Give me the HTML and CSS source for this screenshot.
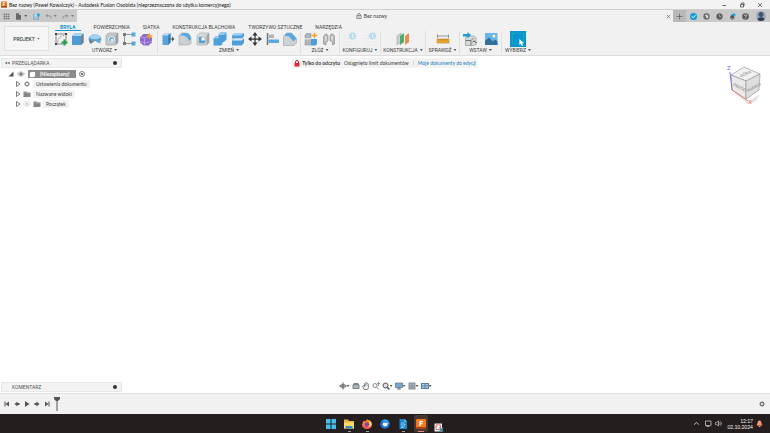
FILE: index.html
```html
<!DOCTYPE html>
<html lang="pl">
<head>
<meta charset="utf-8">
<title>Bez nazwy - Autodesk Fusion Osobista</title>
<link rel="stylesheet" href="styles.css">
</head>
<body>
<header class="titlebar">
  <svg class="app-logo" viewBox="0 0 14 14"><rect width="14" height="14" rx="2" fill="#e8701a"/><path d="M5 11V3h5M5 7h4" fill="none" stroke="#fff" stroke-width="2"/><path d="M0 11h14v3H0z" fill="#9c4312"/></svg>
  <h1>Bez nazwy (Paweł Kowalczyk) - Autodesk Fusion Osobista (nieprzeznaczona do użytku komercyjnego)</h1>
  <div class="window-controls">
    <button aria-label="Minimalizuj"><svg viewBox="0 0 12 12"><path d="M3 7h7" stroke="#444" stroke-width="1.6"/></svg></button>
    <button aria-label="Przywróć"><svg viewBox="0 0 12 12"><path d="M3 5h6v5H3zM5 4V2h5v6" fill="none" stroke="#444" stroke-width="1.6"/></svg></button>
    <button aria-label="Zamknij"><svg viewBox="0 0 12 12"><path d="M2 2l8 8M10 2l-8 8" stroke="#444" stroke-width="1.4"/></svg></button>
  </div>
</header>

<div class="docbar">
  <div class="quick">
    <button aria-label="Panel danych"><svg viewBox="0 0 20 20"><path d="M2 2h4v4H2zM8 2h4v4H8zM14 2h4v4h-4zM2 8h4v4H2zM8 8h4v4H8zM14 8h4v4h-4zM2 14h4v4H2zM8 14h4v4H8zM14 14h4v4h-4z" fill="#6b6b6b"/></svg></button>
    <button class="with-caret" aria-label="Plik"><svg viewBox="0 0 20 20"><path d="M3 1h9l5 5v13H3z" fill="#666"/><path d="M12 1v5h5" fill="#ddd"/></svg><i class="caret"></i></button>
    <button aria-label="Zapisz"><svg viewBox="0 0 20 20"><path d="M2 4h14v14H2z" fill="#a9c6da" stroke="#6d9ab8" stroke-width="2"/><path d="M5 4h6v5H5z" fill="#eef5fa"/><circle cx="15" cy="6" r="5" fill="#3aa4dc"/></svg></button>
    <button class="with-caret dim" aria-label="Cofnij"><svg viewBox="0 0 20 20"><path d="M8 3L3 8l5 5M3 8h8c5 0 7 4 6 8" fill="none" stroke="#666" stroke-width="2.4"/></svg><i class="caret"></i></button>
    <button class="with-caret dim" aria-label="Ponów"><svg viewBox="0 0 20 20"><path d="M12 3l5 5-5 5M17 8H9c-5 0-7 4-6 8" fill="none" stroke="#666" stroke-width="2.4"/></svg><i class="caret"></i></button>
  </div>
  <div class="doc-tab">
    <span class="doc-name"><svg viewBox="0 0 14 14"><path d="M4 6V4a3 3 0 0 1 6 0v2M2 6h10v7H2zM7 8v3" fill="none" stroke="#555" stroke-width="1.5"/></svg>Bez nazwy</span>
    <button class="tab-close" aria-label="Zamknij kartę"><svg viewBox="0 0 12 12"><path d="M2 2l8 8M10 2l-8 8" stroke="#666" stroke-width="1.7"/></svg></button>
  </div>
  <button class="new-tab" aria-label="Nowa karta"><svg viewBox="0 0 12 12"><path d="M6 1v10M1 6h10" stroke="#666" stroke-width="1.4"/></svg></button>
  <div class="account">
    <button aria-label="Rozszerzenia"><svg viewBox="0 0 20 20"><circle cx="10" cy="10" r="10" fill="#129bdb"/><path d="M5 9l4 5 7-8" fill="none" stroke="#fff" stroke-width="2.5"/></svg></button>
    <button aria-label="Synchronizacja"><svg viewBox="0 0 20 20"><circle cx="10" cy="10" r="9" fill="#666"/><path d="M7 5h5l4 5-3 5H9V9H6z" fill="#ddd"/></svg></button>
    <button aria-label="Zadania"><svg viewBox="0 0 20 20"><circle cx="10" cy="10" r="9" fill="#606060"/><path d="M10 4v6h5" fill="none" stroke="#bbb" stroke-width="2"/></svg></button>
    <button aria-label="Powiadomienia"><svg viewBox="0 0 20 20"><path d="M2 16c3-3 1-10 8-12 5 2 4 8 7 12zM7 17h5v2H7z" fill="#555"/><circle cx="14" cy="5" r="4.5" fill="#1ba1e2"/></svg></button>
    <button aria-label="Pomoc"><svg viewBox="0 0 20 20"><circle cx="10" cy="10" r="9.500" fill="#595959"/><path d="M7 8c0-4 6-4 6 0 0 2-3 2-3 4M10 14v2" fill="none" stroke="#fff" stroke-width="2"/></svg></button>
    <button class="avatar" aria-label="Konto"><svg viewBox="0 0 20 20"><circle cx="10" cy="10" r="10" fill="#9cabbb"/><circle cx="10" cy="7" r="5" fill="#3e536c"/><path d="M3 17c1-6 13-6 14 0-3 4-11 4-14 0z" fill="#2d405a"/></svg></button>
  </div>
</div>

<section class="ribbon">
  <button class="workspace">PROJEKT<i class="caret"></i></button>
  <div class="ribbon-main">
    <nav class="tabs">
      <a href="#" class="active">BRYŁA</a><a href="#">POWIERZCHNIA</a><a href="#">SIATKA</a><a href="#">KONSTRUKCJA BLACHOWA</a><a href="#">TWORZYWO SZTUCZNE</a><a href="#">NARZĘDZIA</a>
    </nav>
    <div class="groups">
      <div class="group g-create">
        <div class="tools">
          <button aria-label="Utwórz szkic"><svg viewBox="0 0 28 28"><path d="M4 4h20v20H4z" fill="none" stroke="#666" stroke-width="1.500"/><path d="M7 21C8 13 12 8 20 7" fill="none" stroke="#777" stroke-width="1.500" stroke-dasharray="4 2"/><path d="M2 2h4v4H2zM22 2h4v4h-4zM2 22h4v4H2z" fill="#444"/><path d="M21 15v12M15 21h12" stroke="#23a047" stroke-width="4"/></svg></button>
          <button aria-label="Wyciągnij"><svg viewBox="0 0 28 28"><path d="M2 8l5-5h18v18l-5 5H2z" fill="#4e9bd5"/><path d="M2 8l5-5h18l-5 5z" fill="#a9d4f3"/><path d="M20 8l5-5v18l-5 5z" fill="#747e87"/></svg></button>
          <button aria-label="Obrót"><svg viewBox="0 0 28 28"><path d="M1 14C3 1 25 1 27 14l-3 9-7-3c-1-3-5-3-6 0l-7 3z" fill="#64ade0"/><path d="M3 10c5-8 17-8 22 0-4 6-18 6-22 0z" fill="#a3d0ef"/><path d="M2 13c5 5 18 5 24 0" fill="none" stroke="#5d7f98"/><path d="M2 15l9 4-6 5z" fill="#777"/></svg></button>
          <button aria-label="Otwór"><svg viewBox="0 0 28 28"><path d="M2 7l5-5h19v19l-5 5H2z" fill="#c9cccf" stroke="#888"/><path d="M21 7l5-5v19l-5 5z" fill="#999fa4"/><circle cx="13" cy="15" r="8" fill="#eee" stroke="#888"/><circle cx="13" cy="15" r="5" fill="#62ade1"/><circle cx="14" cy="16" r="3" fill="#eee"/></svg></button>
          <button aria-label="Szyk"><svg viewBox="0 0 28 28"><path d="M5 5h18M5 5v18M5 23h18" stroke="#777" stroke-width="1.500"/><path d="M2 2h6v6H2zM2 20h6v6H2z" fill="#777"/><path d="M19 1h8v8h-8zM19 19h8v8h-8z" fill="#59a9df"/></svg></button>
          <button aria-label="Utwórz formę"><svg viewBox="0 0 28 28"><path d="M2 10l7-6h10l7 8v9l-7 6H9l-7-6z" fill="#8e6acb"/><path d="M2 10l9 2 9-4M11 12v15M2 19c8 3 16 3 24-1" fill="none" stroke="#c3a8eb" stroke-width="1.500"/><path d="M21 1l2 5 5 2-5 2-2 5-2-5-5-2 5-2z" fill="#f7a51c"/></svg></button>
        </div>
        <button class="group-label">UTWÓRZ<i class="caret"></i></button>
      </div>
      <div class="group g-modify">
        <div class="tools">
          <button aria-label="Naciśnij i wyciągnij"><svg viewBox="0 0 28 28"><path d="M3 7l5-5h11v19l-5 5H3z" fill="#58a5dc"/><path d="M3 7l5-5h11l-5 5z" fill="#b9dcf4"/><path d="M14 7l5-5v19l-5 5z" fill="#3684bd"/><path d="M17 13h5V9l5 5-5 5v-4h-5z" fill="#555"/></svg></button>
          <button aria-label="Zaokrąglenie"><svg viewBox="0 0 28 28"><path d="M2 7l5-5h7c8 0 12 6 12 12v9l-5 3H2z" fill="#ccd0d2" stroke="#999"/><path d="M9 2h6c7 0 11 5 11 12l-5 4C21 11 15 7 4 7z" fill="#59a9df"/></svg></button>
          <button aria-label="Skorupa"><svg viewBox="0 0 28 28"><path d="M2 7l5-5h19v19l-5 5H2z" fill="#d8dbdd" stroke="#8c9195"/><path d="M21 7l5-5v19l-5 5z" fill="#a0a5aa"/><path d="M6 10h12v12H6z" fill="#f5f5f5" stroke="#888"/><path d="M6 22l5-5v-7H6zM6 22l5-5h7v5z" fill="#53a2da"/></svg></button>
          <button aria-label="Połącz"><svg viewBox="0 0 28 28"><path d="M1 13l4-4h6V5l4-4h12v14l-5 5h-3v4l-3 3H1z" fill="#4d9fda"/><path d="M1 13l4-4h6V5l4-4h12l-5 5H11v7z" fill="#93c9ef"/></svg></button>
          <button aria-label="Podziel"><svg viewBox="0 0 28 28"><path d="M2 7l5-5h19v7l-5 4H2z" fill="#4d9fda"/><path d="M2 7l5-5h19l-5 5z" fill="#a3d0ef"/><path d="M2 16l5-3h19v9l-5 5H2z" fill="#4d9fda"/><path d="M2 17l5-4h19l-5 4z" fill="#dceaf4"/></svg></button>
          <button aria-label="Przesuń"><svg viewBox="0 0 28 28"><path d="M14 5v18M5 14h18" stroke="#333" stroke-width="2.500"/><path d="M14 0l5 7H9zM14 28l5-7H9zM0 14l7-5v10zM28 14l-7-5v10z" fill="#333"/></svg></button>
          <button aria-label="Wyrównaj"><svg viewBox="0 0 28 28"><path d="M3 2v24" stroke="#777" stroke-width="3"/><path d="M5 5h11v7H5z" fill="#aeb4b8"/><path d="M5 15h21v7H5z" fill="#59a9df"/></svg></button>
          <button aria-label="Fazowanie"><svg viewBox="0 0 28 28"><path d="M1 9l6-7h10l10 11v9l-5 5H1z" fill="#cdd1d4" stroke="#92979b"/><path d="M7 2h10l10 11-6 6L11 8H3z" fill="#59a9df"/></svg></button>
        </div>
        <button class="group-label">ZMIEŃ<i class="caret"></i></button>
      </div>
      <div class="group g-assemble">
        <div class="tools">
          <button aria-label="Nowy komponent"><svg viewBox="0 0 28 28"><path d="M2 6l3-3h9v9H2zM2 15h11v11H2z" fill="#afb5b9" stroke="#858b90"/><path d="M2 15l3-3h9l-2 3z" fill="#e1e4e6"/><path d="M14 14h12v10l-3 3h-9z" fill="#4d9fda"/><path d="M21 0l2 5 5 2-5 2-2 5-2-5-5-2 5-2z" fill="#f7a51c"/></svg></button>
          <button aria-label="Połączenie"><svg viewBox="0 0 28 28"><path d="M3 24V11c1-9 9-9 9-2v9l-4 3v5zM16 9c0-7 9-7 9 2v13l-4 2v-6l-5-3z" fill="#b5b9bc" stroke="#777"/><path d="M8 8v10M20 8v9" stroke="#f0f0f0" stroke-width="2"/></svg></button>
        </div>
        <button class="group-label">ZŁÓŻ<i class="caret"></i></button>
      </div>
      <div class="group g-configure">
        <div class="tools">
          <button aria-label="Konfiguracja"><svg viewBox="0 0 28 28"><path d="M2 7h24v19H2zM2 13h24M2 20h24M10 7v19" fill="#f2f3f3" stroke="#e2e4e5"/><circle cx="19" cy="8" r="7" fill="#b9dced"/><path d="M19 4v6l4 2" fill="none" stroke="#eef7fb" stroke-width="2"/></svg></button>
          <button aria-label="Tabela konfiguracji"><svg viewBox="0 0 28 28"><path d="M2 7h24v19H2zM2 13h24M2 20h24M10 7v19" fill="#f2f3f3" stroke="#e2e4e5"/><circle cx="19" cy="8" r="7" fill="#b9dced"/><path d="M19 4v6l4 2" fill="none" stroke="#eef7fb" stroke-width="2"/></svg></button>
        </div>
        <button class="group-label">KONFIGURUJ<i class="caret"></i></button>
      </div>
      <div class="group g-construct">
        <div class="tools">
          <button aria-label="Płaszczyzna odsunięta"><svg viewBox="0 0 28 28"><path d="M2 8l8-6v18l-8 6z" fill="#ccd0d2" stroke="#8d9296"/><path d="M8 8l8-6v18l-8 6z" fill="#49ad6b"/><path d="M18 8l8-6v18l-8 6z" fill="#ec8b4b"/></svg></button>
        </div>
        <button class="group-label">KONSTRUKCJA<i class="caret"></i></button>
      </div>
      <div class="group g-inspect">
        <div class="tools">
          <button aria-label="Zmierz"><svg viewBox="0 0 28 28"><path d="M3 5v7M25 5v7M3 8h22" stroke="#777" stroke-width="1.500"/><path d="M2 14h24v8H2z" fill="#eda92e" stroke="#b98020"/><path d="M6 14v3M10 14v4M14 14v3M18 14v4M22 14v3" stroke="#805d20"/></svg></button>
        </div>
        <button class="group-label">SPRAWDŹ<i class="caret"></i></button>
      </div>
      <div class="group g-insert">
        <div class="tools">
          <button aria-label="Wstaw pochodną"><svg viewBox="0 0 28 28"><path d="M7 8h15l4 4v13l-5 2H5V13z" fill="#d6dadd" stroke="#777"/><path d="M5 17h11l5-5M16 17v10" fill="none" stroke="#777" stroke-width="2"/><path d="M0 4h9V0l7 6-7 7V9H0z" fill="#249bd8"/><path d="M19 20c6-5 6 4 8 1" fill="none" stroke="#444" stroke-width="2"/></svg></button>
          <button aria-label="Wstaw obraz"><svg viewBox="0 0 28 28"><path d="M2 2h25v24H2z" fill="#69b5e8"/><circle cx="20" cy="8" r="3" fill="#fff3ae"/><path d="M2 18l8-7 8 8 4-4 5 4v7H2z" fill="#32709c"/></svg></button>
        </div>
        <button class="group-label">WSTAW<i class="caret"></i></button>
      </div>
      <div class="group g-select">
        <div class="tools">
          <button class="selected" aria-label="Wybierz"><svg viewBox="0 0 30 30"><path d="M3 3h24v22H3z" fill="none" stroke="#4cb875" stroke-width="1.500" stroke-dasharray="3 2"/><path d="M18 15v13l3-3 2 5 3-1-2-5h4z" fill="#fff"/></svg></button>
        </div>
        <button class="group-label">WYBIERZ<i class="caret"></i></button>
      </div>
    </div>
  </div>
</section>

<main class="canvas">
  <aside class="browser">
    <div class="panel-head"><svg class="collapse" viewBox="0 0 12 8"><path d="M0 4l5-3v6zM6 4l5-3v6z" fill="#555"/></svg><h2>PRZEGLĄDARKA</h2><button class="dot" aria-label="Opcje przeglądarki"></button></div>
    <ul class="tree">
      <li class="root">
        <svg viewBox="0 0 12 12"><path d="M1 11h10V1z" fill="#555"/></svg>
        <svg class="wide" viewBox="0 0 16 12"><path d="M1 6c4-6 10-6 14 0-4 6-10 6-14 0z" fill="#ddd" stroke="#888"/><circle cx="8" cy="6" r="3" fill="#777"/></svg>
        <span class="root-name"><svg class="doc" viewBox="0 0 14 14"><path d="M4 1h9v9l-3 3H1V4z" fill="#fff" stroke="#666"/></svg><b>(Niezapisany)</b></span>
        <svg viewBox="0 0 12 12"><circle cx="6" cy="6" r="5" fill="#fff" stroke="#555" stroke-width="1.500"/><circle cx="6" cy="6" r="2" fill="#444"/></svg>
      </li>
      <li><svg viewBox="0 0 12 12"><path d="M3 1l7 5-7 5z" fill="#fff" stroke="#555" stroke-width="1.500"/></svg><svg class="wide" viewBox="0 0 16 12"><circle cx="8" cy="6" r="3.500" fill="none" stroke="#777" stroke-width="2"/><path d="M8 0v2M8 10v2M2 6h2M12 6h2M4 2l1 1M11 9l1 1M12 2l-1 1M5 9l-1 1" stroke="#777" stroke-width="1.500"/></svg><span>Ustawienia dokumentu</span></li>
      <li><svg viewBox="0 0 12 12"><path d="M3 1l7 5-7 5z" fill="#fff" stroke="#555" stroke-width="1.500"/></svg><svg class="wide" viewBox="0 0 16 12"><path d="M1 1h6l1 2h7v9H1z" fill="#858585"/><path d="M1 4h14" stroke="#bbb"/></svg><span>Nazwane widoki</span></li>
      <li><svg viewBox="0 0 12 12"><path d="M3 1l7 5-7 5z" fill="#fff" stroke="#555" stroke-width="1.500"/></svg><svg class="wide" viewBox="0 0 16 12"><path d="M1 6c4-6 10-6 14 0-4 6-10 6-14 0z" fill="#fff" stroke="#aaa"/><circle cx="8" cy="6" r="2" fill="#bbb"/></svg><svg class="wide" viewBox="0 0 16 12"><path d="M1 1h6l1 2h7v9H1z" fill="#858585"/><path d="M1 4h14" stroke="#bbb"/></svg><span>Początek</span></li>
    </ul>
  </aside>
  <div class="notice"><svg viewBox="0 0 12 14"><path d="M3 6V4a3 3 0 0 1 6 0v2" fill="none" stroke="#d8232e" stroke-width="2"/><path d="M1 6h10v7H1z" fill="#e32631"/></svg><strong>Tylko do odczytu</strong><span>Osiągnięto limit dokumentów</span><a href="#">Moje dokumenty do edycji</a></div>
  <svg class="viewcube" viewBox="0 0 40 42" role="img" aria-label="Kostka widoku">
    <path d="M7 29l15 10 12-8-4 7-8 3z" fill="#e2e2e2"/>
    <path d="M5 12L18 4l16 7-14 7z" fill="#f1f1f1" stroke="#999" stroke-width=".7"/>
    <path d="M5 12l15 6v18L6 27z" fill="#e9e9e9" stroke="#999" stroke-width=".7"/>
    <path d="M20 18l14-7-1 16-13 9z" fill="#dedede" stroke="#999" stroke-width=".7"/>
    <path d="M4 9l2 18" stroke="#7777e6"/><path d="M6 27l16 11" stroke="#ed7b7b"/>
    <text class="face" x="14" y="13" transform="rotate(-24 18 12)">GÓRA</text>
    <text class="face" x="7" y="25" transform="rotate(28 12 24)">PRZÓD</text>
    <text class="face" x="21" y="27" transform="rotate(-29 26 26)">PRAWO</text>
    <text class="axis z" x="1" y="7">Z</text><text class="axis x" x="22" y="41">X</text>
  </svg>
  <div class="panel-head comments"><h2>KOMENTARZ</h2><button class="dot" aria-label="Opcje komentarzy"></button></div>
  <div class="navbar">
    <button class="with-caret" aria-label="Orbita"><svg viewBox="0 0 16 16"><path d="M8 1v14M1 8h14" stroke="#555" stroke-width="2"/><ellipse cx="8" cy="8" rx="6" ry="3" fill="none" stroke="#666" stroke-width="1.500"/></svg><i class="caret"></i></button>
    <button aria-label="Spójrz na"><svg viewBox="0 0 16 16"><path d="M1 6l3-4h8l3 4v8H1z" fill="#7b858b"/><path d="M3 7h10v2H3zM3 11h10v1H3z" fill="#dce0e2"/></svg></button>
    <button aria-label="Przesuń widok"><svg viewBox="0 0 16 16"><path d="M4 15L1 8l2-1 2 2V3l2-1 1-1 2 1 2 1 1 2v6l-2 4z" fill="#eee" stroke="#666" stroke-width="1.500"/><path d="M7 3v5M10 3v5" stroke="#666"/></svg></button>
    <button aria-label="Powiększ"><svg viewBox="0 0 16 16"><circle cx="6" cy="7" r="4" fill="none" stroke="#666" stroke-width="1.500"/><path d="M9 10l5 5M13 1v7M10 4l3-3 3 3" fill="none" stroke="#557d9a" stroke-width="1.500"/></svg></button>
    <button class="with-caret" aria-label="Dopasuj"><svg viewBox="0 0 16 16"><circle cx="7" cy="7" r="5" fill="#ddd" stroke="#555" stroke-width="2"/><path d="M10 10l5 5" stroke="#555" stroke-width="3"/></svg><i class="caret"></i></button>
    <button class="with-caret" aria-label="Ustawienia wyświetlania"><svg viewBox="0 0 16 16"><path d="M1 2h14v9H1z" fill="#72a8d5" stroke="#607483" stroke-width="1.500"/><path d="M8 11v3M4 14h8" stroke="#666" stroke-width="2"/></svg><i class="caret"></i></button>
    <button class="with-caret" aria-label="Siatka"><svg viewBox="0 0 16 16"><path d="M1 1h14v14H1z" fill="#8c9397"/><path d="M1 5h14M1 10h14M5 1v14M10 1v14" stroke="#b3b8bb"/></svg><i class="caret"></i></button>
    <button class="with-caret" aria-label="Widoki"><svg viewBox="0 0 16 16"><path d="M0 2h16v12H0z" fill="#5a7fa3"/><path d="M2 4h5v3H2zM9 4h5v3H9zM2 9h5v3H2zM9 9h5v3H9z" fill="#a9cceb"/></svg><i class="caret"></i></button>
  </div>
</main>

<section class="timeline">
  <div class="transport">
    <button aria-label="Początek"><svg viewBox="0 0 12 12"><path d="M2 1v10" stroke="#555" stroke-width="2"/><path d="M10 1v10L3 6z" fill="#555"/></svg></button>
    <button aria-label="Wstecz"><svg viewBox="0 0 12 12"><path d="M1 6l6-5v3h4v4H7v3z" fill="#555"/></svg></button>
    <button aria-label="Odtwórz"><svg viewBox="0 0 12 12"><path d="M2 0l9 6-9 6z" fill="#555"/></svg></button>
    <button aria-label="Dalej"><svg viewBox="0 0 12 12"><path d="M11 6L5 1v3H1v4h4v3z" fill="#555"/></svg></button>
    <button aria-label="Koniec"><svg viewBox="0 0 12 12"><path d="M10 1v10" stroke="#555" stroke-width="2"/><path d="M2 1v10l7-5z" fill="#555"/></svg></button>
    <svg class="marker" viewBox="0 0 6 14"><path d="M0 0h6v2L4 4H2L0 2z" fill="#555"/><path d="M3 3v11" stroke="#555" stroke-width="1"/></svg>
  </div>
  <button aria-label="Ustawienia osi czasu"><svg viewBox="0 0 14 14"><circle cx="7" cy="7" r="4" fill="none" stroke="#777" stroke-width="3"/><path d="M7 0v14M0 7h14M2 2l10 10M12 2L2 12" stroke="#777" stroke-width="1.500"/><circle cx="7" cy="7" r="2.500" fill="#f0f0f0"/></svg></button>
</section>

<footer class="taskbar">
  <div class="apps">
    <button aria-label="Start"><svg viewBox="0 0 20 20"><path d="M0 0h9v9H0zM11 0h9v9h-9zM0 11h9v9H0zM11 11h9v9h-9z" fill="#45bef0"/></svg></button>
    <button class="open" aria-label="Eksplorator plików"><svg viewBox="0 0 20 20"><path d="M0 1h8l2 3h10v15H0z" fill="#edb338"/><path d="M0 7h20v12H0z" fill="#ffdb6c"/><path d="M3 14h14v5H3z" fill="#3489cd"/></svg></button>
    <button class="open" aria-label="Firefox"><svg viewBox="0 0 20 20"><path d="M3 3l3 2 5-5 1 3c6 0 8 4 8 8 0 12-20 12-20 0z" fill="#ff7838"/><path d="M12 2c5 1 7 4 7 9-1 3-4 5-8 5 3-4 5-8 1-14z" fill="#ffd04b"/><path d="M1 10c2 7 11 9 17 5-5 7-17 5-17-5z" fill="#f3355d"/><circle cx="10" cy="11" r="4.500" fill="#7847ba"/></svg></button>
    <button aria-label="Thunderbird"><svg viewBox="0 0 20 20"><circle cx="10" cy="10" r="9.500" fill="#216fd3"/><path d="M3 4c8-6 15-1 16 6l-6-4z" fill="#3ba9f3"/><path d="M7 7l9 1-2 6-6 1-3-4z" fill="#eef5ff"/></svg></button>
    <button class="open" aria-label="Writer"><svg viewBox="0 0 20 20"><path d="M3 0h10l5 5v15H3z" fill="#1688cf"/><path d="M13 0v5h5z" fill="#8bd0f4"/><path d="M6 8h8M6 11h3M6 14h8M6 17h5M11 11h4" stroke="#fff"/></svg></button>
    <button class="open current" aria-label="Fusion"><svg viewBox="0 0 20 20"><rect width="20" height="20" rx="2" fill="#f17920"/><path d="M8 14V5h6M8 9h5" fill="none" stroke="#fff" stroke-width="2.500"/><path d="M0 16h20v4H0z" fill="#aa4513"/></svg></button>
    <button class="snip" aria-label="Wycinanie"><svg viewBox="0 0 20 20"><path d="M1 3h15v16H1z" fill="#f2eeee"/><path d="M4 6h9v9H4z" fill="#fff" stroke="#d45858" stroke-width="2" stroke-dasharray="4 1"/><path d="M11 11l7 8M18 12l-7 7" stroke="#3e8aae" stroke-width="2.500"/></svg></button>
  </div>
  <div class="tray">
    <svg viewBox="0 0 12 12"><path d="M2 8l4-4 4 4" fill="none" stroke="#ddd" stroke-width="1.500"/></svg>
    <svg class="net" viewBox="0 0 14 14"><path d="M8 11H1V2h11v4M3 13h6M12 6v5h-3" fill="none" stroke="#ddd" stroke-width="1.400"/></svg>
    <svg viewBox="0 0 14 14"><path d="M1 5h2l4-3v10L3 9H1zM9 5q2 2 0 4M11 3q4 4 0 8" fill="none" stroke="#ddd" stroke-width="1.300"/></svg>
    <div class="clock"><time>12:17</time><time>02.10.2024</time></div>
    <svg viewBox="0 0 14 14"><path d="M1 11c3-4 1-9 6-10 5 1 3 6 6 10zM5 12h4v2H5z" fill="#ff9876"/></svg>
  </div>
</footer>
</body>
</html>
```
FILE: styles.css
```css
* { box-sizing: border-box; }
body {
  margin: 0;
  height: 100vh;
  display: flex;
  flex-direction: column;
  overflow: hidden;
  background: #fff;
  color: #3c3c3c;
  font: 5px/6px Lato, "Noto Sans", sans-serif;
}
h1, h2, ul { margin: 0; padding: 0; font: inherit; }
ul { list-style: none; }
button {
  margin: 0;
  padding: 0;
  border: 0;
  background: none;
  color: inherit;
  font: inherit;
  display: flex;
  align-items: center;
  justify-content: center;
}
a { color: inherit; text-decoration: none; }
svg { display: block; flex: none; width: 6px; height: 6px; }
.caret {
  flex: none;
  width: 3px;
  height: 2px;
  margin-left: 2px;
  background: #555;
  clip-path: polygon(0 0, 100% 0, 50% 100%);
}

.titlebar {
  flex: none;
  height: 10px;
  display: flex;
  align-items: center;
  padding: 0 7px 0 1px;
  background: #f3f3f3;
  border-bottom: 1px solid #cfcfcf;
}
.app-logo { width: 6px; height: 7px; margin-right: 2px; }
.titlebar h1 { color: #111; white-space: nowrap; }
.window-controls { margin-left: auto; display: flex; gap: 12px; }

.docbar { flex: none; height: 12px; display: flex; background: #c9c9c9; }
.quick { width: 77px; display: flex; align-items: center; justify-content: space-between; padding: 0 3px; }
.quick svg { width: 7px; height: 7px; }
.dim { opacity: .7; }
.doc-tab { flex: 1; display: flex; align-items: center; background: #f1f1f1; padding-right: 2px; }
.doc-name { flex: 1; display: flex; align-items: center; justify-content: center; gap: 2px; }
.tab-close svg { width: 5px; height: 5px; }
.new-tab { width: 13px; background: #b9b9b9; }
.new-tab svg { width: 7px; height: 7px; }
.account { display: flex; align-items: center; gap: 6px; padding: 0 4px; }
.account svg { width: 7px; height: 7px; }
.account .avatar { margin-left: 1px; }
.account .avatar svg { width: 10px; height: 10px; }

.ribbon {
  flex: none;
  height: 34px;
  display: flex;
  background: #f1f1f1;
  border-bottom: 1px solid #dcdcdc;
  font-family: Roboto, "Noto Sans", sans-serif;
}
.workspace { width: 45px; height: 25px; margin: 4px 3px 0 4px; border: 1px solid #e1e1e1; background: #f5f5f5; font-weight: 500; }
.ribbon-main { flex: 1; }
.tabs { display: flex; gap: 13px; height: 9px; padding-left: 3px; white-space: nowrap; }
.tabs a { padding-top: 2px; }
.tabs .active { padding: 2px 5px 0; color: #1597d4; font-weight: 700; border-bottom: 1px solid #1597d4; }
.groups { display: flex; }
.group { height: 23px; display: flex; flex-direction: column; align-items: center; border-right: 1px solid #e0e0e0; }
.tools { width: 100%; height: 16px; display: flex; align-items: center; justify-content: space-between; padding: 0 3px; }
.tools svg { width: 14px; height: 14px; }
.group-label { white-space: nowrap; }
.g-create { width: 106px; }
.g-create .tools { padding: 0 4px 0 2px; }
.g-modify { width: 143px; }
.g-assemble { width: 39px; }
.g-configure { width: 41px; }
.g-construct { width: 45px; }
.g-inspect { width: 34px; }
.g-insert { width: 42px; }
.g-select { width: 32px; border-right: 0; }
.g-construct .tools, .g-inspect .tools, .g-select .tools { justify-content: center; }
.selected { width: 16px; height: 16px; background: #0795d6; }

.canvas {
  flex: 1;
  display: grid;
  grid-template: auto 1fr auto / 1fr auto 1fr;
  padding: 2px 0 1px;
}
.browser, .comments { width: 121px; margin-left: 1px; }
.panel-head { height: 10px; display: flex; align-items: center; padding: 0 4px 0 3px; background: #f3f3f3; border: 1px solid #e7e7e7; color: #555; font-family: Roboto, sans-serif; }
.collapse { width: 5px; height: 4px; margin-right: 2px; }
.dot { width: 4px; height: 4px; margin-left: auto; border-radius: 50%; background: #333; }
.tree { display: flex; flex-direction: column; padding: 1px 0 0 7px; }
.tree li { height: 10px; display: flex; align-items: center; gap: 2px; padding-left: 7px; }
.tree .root { padding-left: 0; gap: 3px; }
.tree .wide { width: 8px; height: 6px; }
.tree span { height: 8px; padding: 1px 3px; background: #f2f2f2; }
.tree .root-name { width: 48px; display: flex; align-items: center; gap: 4px; padding: 0 1px; background: #8b8b8b; color: #fff; }
.doc { width: 7px; height: 7px; }
.notice { align-self: start; height: 10px; display: flex; align-items: center; gap: 4px; padding: 0 2px; background: #f3f3f3; white-space: nowrap; }
.notice svg { height: 7px; margin-right: -2px; }
.notice strong { font-weight: 700; }
.notice a { padding-left: 4px; border-left: 1px solid #ddd; color: #1681bd; }
.viewcube { justify-self: end; width: 40px; height: 42px; margin: 5px 4px 0 0; }
.face { font-size: 4px; font-weight: 700; fill: #999; }
.axis { font-size: 6px; }
.z { fill: #6868df; }
.x { fill: #ed6868; }
.comments { grid-area: 3 / 1; align-self: end; padding-left: 10px; }
.navbar { grid-area: 3 / 2; justify-self: center; height: 12px; display: flex; align-items: center; gap: 2px; }
.navbar svg { width: 8px; height: 8px; }
.navbar .caret { margin-left: 0; }

.timeline {
  flex: none;
  height: 21px;
  display: flex;
  align-items: center;
  justify-content: space-between;
  padding: 0 5px 0 4px;
  background: #f1f1f1;
  border-top: 1px solid #e1e1e1;
}
.transport { display: flex; align-items: center; gap: 4px; }
.marker { width: 6px; height: 14px; }

.taskbar { flex: none; height: 19px; display: grid; grid-template-columns: 1fr auto 1fr; align-items: center; background: #241f1e; color: #eee; }
.apps { grid-column: 2; display: flex; gap: 4px; }
.apps button { width: 14px; height: 17px; border-radius: 2px; }
.apps svg { width: 10px; height: 10px; }
.apps .open { background: linear-gradient(#999, #999) center bottom / 3px 1px no-repeat; }
.apps .current { background: linear-gradient(#ed8d76, #ed8d76) center bottom / 6px 1px no-repeat #493832; }
.apps .snip { align-items: flex-end; }
.tray { justify-self: end; display: flex; align-items: center; gap: 3px; padding-right: 7px; }
.tray svg { width: 7px; height: 7px; }
.tray .net { margin-left: 2px; }
.clock { display: flex; flex-direction: column; align-items: flex-end; padding-left: 2px; }
```
